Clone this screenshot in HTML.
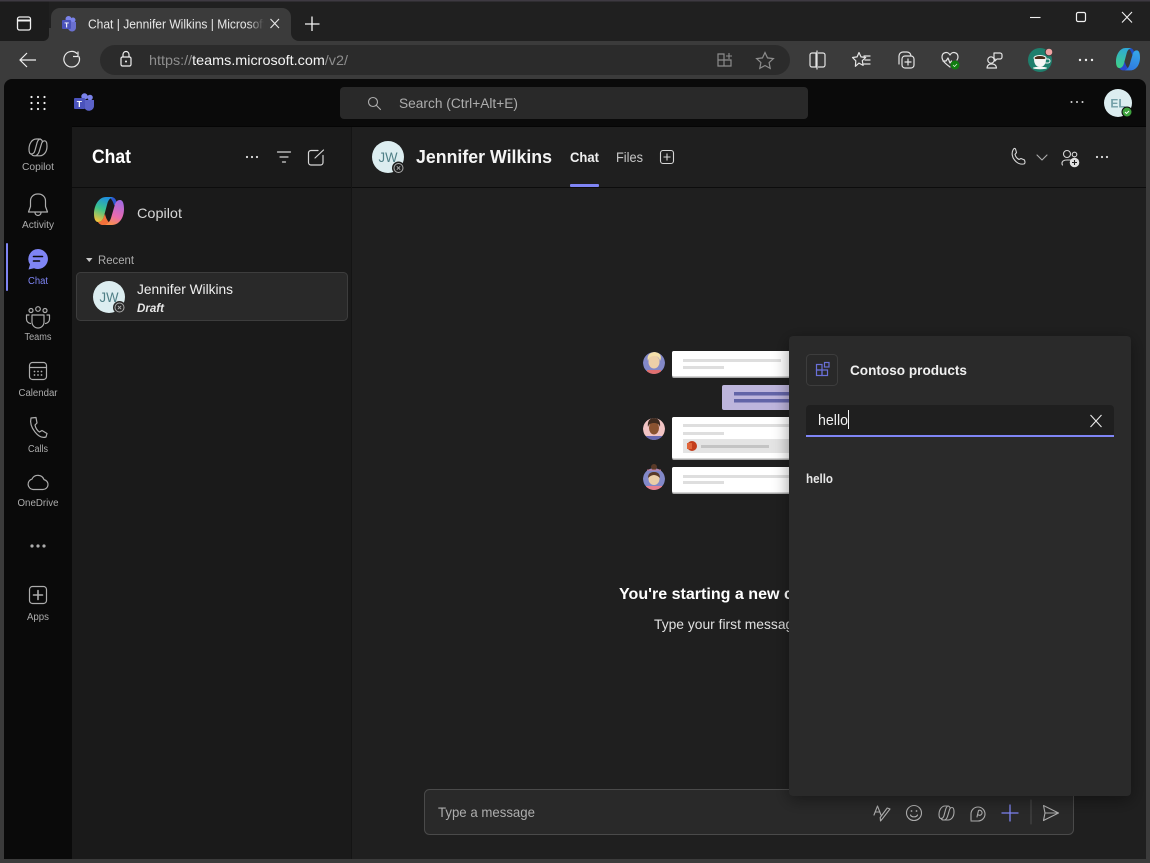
<!DOCTYPE html>
<html lang="en"><head><meta charset="utf-8"><title>Chat | Jennifer Wilkins | Microsoft Teams</title>
<style>
html,body{margin:0;padding:0;background:#1f1f1f;width:1150px;height:863px;overflow:hidden}
svg{display:block}
text{font-family:"Liberation Sans",sans-serif}
.i{fill:none;stroke:#e4e4e4;stroke-width:1.2;stroke-linecap:round;stroke-linejoin:round}
.g{fill:none;stroke:#adadad;stroke-width:1.1;stroke-linecap:round;stroke-linejoin:round}
.l{fill:#adadad;font-size:10px;text-anchor:middle}
.v{vector-effect:non-scaling-stroke}
</style></head><body>
<svg width="1150" height="863" viewBox="0 0 1150 863" xmlns="http://www.w3.org/2000/svg">
<defs>
<linearGradient id="c1" x1=".6" y1="0" x2=".3" y2="1"><stop offset="0" stop-color="#1f8fe0"/><stop offset=".5" stop-color="#3cc48a"/><stop offset="1" stop-color="#f3c23c"/></linearGradient>
<linearGradient id="c2" x1=".6" y1="0" x2=".3" y2="1"><stop offset="0" stop-color="#a56be0"/><stop offset=".6" stop-color="#e86ab0"/><stop offset="1" stop-color="#f8924a"/></linearGradient>
<linearGradient id="c3" x1=".6" y1="0" x2=".3" y2="1"><stop offset="0" stop-color="#2fa8d8"/><stop offset="1" stop-color="#3fd08a"/></linearGradient>
<linearGradient id="c4" x1=".6" y1="0" x2=".3" y2="1"><stop offset="0" stop-color="#35a5ea"/><stop offset="1" stop-color="#2f78e0"/></linearGradient>
<linearGradient id="fade" x1="0" x2="1"><stop offset="0" stop-color="#3b3b3b" stop-opacity="0"/><stop offset="1" stop-color="#3b3b3b"/></linearGradient>
<filter id="sh" x="-10%" y="-10%" width="120%" height="120%"><feDropShadow dx="0" dy="4" stdDeviation="8" flood-color="#000" flood-opacity=".4"/></filter>
<clipPath id="tabc"><rect x="88" y="8" width="176" height="30"/></clipPath>
<clipPath id="av1"><circle cx="654" cy="363" r="11"/></clipPath>
<clipPath id="av2"><circle cx="654" cy="429" r="11"/></clipPath>
<clipPath id="av3"><circle cx="654" cy="479" r="11"/></clipPath>
</defs>

<!-- browser chrome -->
<rect width="1150" height="863" fill="#3b3b3b"/>
<rect x="0" y="0" width="1150" height="41" fill="#202020"/>
<rect x="44" y="28" width="256" height="13" fill="#3b3b3b"/>
<path d="M0 0H49V35a6 6 0 0 1-6 6H0z" fill="#1c1c1c"/>
<path d="M291 8H1150V41H299a8 8 0 0 1-8-8z" fill="#202020"/>
<rect x="0" y="0" width="1150" height="1.5" fill="#3e3a42"/>
<path d="M51 41V17a9 9 0 0 1 9-9h222a9 9 0 0 1 9 9v24z" fill="#3b3b3b"/>
<rect x="17.500" y="17" width="13" height="13" rx="2" fill="none" stroke="#f0f0f0" stroke-width="1.300"/>
<path d="M17.500 20.500h13" stroke="#f0f0f0" stroke-width="2" fill="none"/>
<!-- tab favicon -->
<circle cx="73" cy="20" r="2.500" fill="#7b83eb"/><circle cx="68.500" cy="19" r="3" fill="#7b83eb"/>
<path d="M65 22h11v5a4 4 0 0 1-8 1z" fill="#6a70cf"/>
<rect x="62" y="20" width="9" height="9" rx="1" fill="#4b53bc"/>
<text x="64.500" y="27.500" font-size="7" font-weight="700" fill="#fff">T</text>
<g clip-path="url(#tabc)"><text x="88" y="28.500" font-size="12.500" fill="#e8e8e8" textLength="178" lengthAdjust="spacingAndGlyphs">Chat | Jennifer Wilkins | Microsoft</text></g>
<rect x="248" y="10" width="16" height="26" fill="url(#fade)"/>
<path d="M270.500 19l8.500 9M279 19l-8.500 9" stroke="#e8e8e8" stroke-width="1.100" fill="none"/>
<path d="M312 16.500v14.500M305 24h14.500" stroke="#f4f4f4" stroke-width="1.300" fill="none"/>
<!-- window controls -->
<path d="M1030 17.500h10.500" stroke="#f0f0f0" stroke-width="1.100"/>
<rect x="1076.500" y="12.500" width="9" height="9" rx="1.500" fill="none" stroke="#f0f0f0" stroke-width="1.200"/>
<path d="M1122 12l10 10.500M1132 12l-10 10.500" stroke="#f0f0f0" stroke-width="1.100"/>
<!-- toolbar -->
<path d="M36 60H20.500M27 53l-7 7 7 7" fill="none" stroke="#f0f0f0" stroke-width="1.200"/>
<path d="M79 56.500a7.800 7.800 0 1 1-1.800-2.800M78 51.500v5h-5" fill="none" stroke="#e8e8e8" stroke-width="1.200"/>
<rect x="100" y="45" width="690" height="30" rx="15" fill="#2b2b2b"/>
<rect x="121" y="57" width="10" height="9" rx="1.500" fill="none" stroke="#f0f0f0" stroke-width="1.200"/>
<path d="M123 57v-2.500a3 3 0 0 1 6 0V57" fill="none" stroke="#f0f0f0" stroke-width="1.200"/><circle cx="126" cy="61.500" r="1" fill="#f0f0f0"/>
<text x="149" y="65" font-size="14" fill="#8e8e8e" textLength="199" lengthAdjust="spacingAndGlyphs"><tspan>https://</tspan><tspan fill="#f4f4f4">teams.microsoft.com</tspan><tspan>/v2/</tspan></text>
<path d="M718 54h6v12h-6zM724 60h7v6h-7zM718 60h6" fill="none" stroke="#8c8c8c" stroke-width="1.200"/><path d="M729 53v6M726 56h6" stroke="#8c8c8c" stroke-width="1.100"/>
<path d="M765 52.500l2.500 5.400 5.900.7-4.300 4 1.100 5.800-5.200-2.900-5.200 2.900 1.100-5.800-4.300-4 5.900-.7z" fill="none" stroke="#8c8c8c" stroke-width="1.200"/>
<path d="M816 53h-4a2 2 0 0 0-2 2v10a2 2 0 0 0 2 2h4zM818.500 53h4.500a2 2 0 0 1 2 2v10a2 2 0 0 1-2 2h-4.500M817 51v18" class="i"/>
<path d="M859 52.500l2 4.400 4.700.6-3.400 3.200.8 4.700-4.100-2.300-3.600 3.200.4-5.500-3.300-3.300 4.600-.6zM864 56h6M865 60h5M864 64h6" class="i"/>
<path d="M899 64v-8a4 4 0 0 1 4-4h4a4 4 0 0 1 4 4" class="i"/><rect x="902" y="56" width="12" height="12" rx="3" class="i"/><path d="M908 59v6M905 62h6" class="i"/>
<path d="M950 55c2-4 8-3 8 2 0 1-.3 2-1 3M950 55c-2-4-8-3-8 2 0 4 4 7 8 10M943 61h3l2-3 2 5 1.500-2" class="i"/><circle cx="955" cy="65" r="4.500" fill="#107c10"/><path d="M953 65l1.500 1.500 2.500-2.500" stroke="#cfe8cf" fill="none" stroke-width=".8"/>
<circle cx="991" cy="60" r="3.200" class="i"/><path d="M987 68a4 4 0 0 1 4-4h1.500a4 4 0 0 1 4 4z" class="i"/><path d="M994 53h6a2 2 0 0 1 2 2v2a2 2 0 0 1-2 2h-3l-2 2v-2h-1z" class="i"/>
<circle cx="1040" cy="60" r="12" fill="#1f7f6d"/>
<ellipse cx="1040" cy="58" rx="6" ry="2.500" fill="#4a2c18" stroke="#f5f5f5" stroke-width="1"/><path d="M1034 59c0 6 3 8 6 8s6-2 6-8z" fill="#f5f5f5"/><path d="M1046 59h2a2 2 0 0 1 0 4h-3" fill="none" stroke="#f5f5f5"/><ellipse cx="1040" cy="68" rx="7" ry="1.300" fill="#f5f5f5"/>
<circle cx="1049" cy="52" r="3.800" fill="#f0a2a2" stroke="#3b3b3b"/>
<circle cx="1080" cy="60" r="1.200" fill="#f0f0f0"/><circle cx="1086" cy="60" r="1.200" fill="#f0f0f0"/><circle cx="1092" cy="60" r="1.200" fill="#f0f0f0"/>
<g transform="translate(1040.800 -109.600) scale(.8)">
<path d="M108 197h3c3 0 5 2 5.500 5l.5 5-3-2c-1-4-3-7-6-8z" fill="#1f50c8"/>
<path d="M98 222c3 0 5-2 6-6l1-2c1 5 3 8 7 11h-9c-2 0-4-1-5-3z" fill="#2848d0"/>
<path d="M106 197h7c-3 1-4.500 3-5.500 6L104 216c-1 4-3 6-6 6-2.500 0-4-3-4-8 0-9 5-17 12-17z" fill="url(#c3)"/>
<path d="M112 225h-7c3-1 5-4 6-7l3.500-12c1-4 2.500-6 5.500-6s4 4 4 9c0 9-5 16-12 16z" fill="url(#c4)"/>
</g>

<!-- teams app -->
<path d="M4 859V87a8 8 0 0 1 8-8h1126a8 8 0 0 1 8 8v772z" fill="#0a0a0a"/>
<rect x="72" y="127" width="280" height="732" fill="#1a1a1a"/>
<rect x="352" y="127" width="794" height="732" fill="#1f1f1f"/>
<rect x="72" y="126" width="1074" height="1" fill="#050505"/>
<rect x="72" y="187" width="1074" height="1" fill="#0c0c0c"/>
<rect x="351" y="127" width="1" height="732" fill="#141414"/>
<!-- top bar -->
<g fill="#f0f0f0"><circle cx="31.500" cy="97" r="1.100"/><circle cx="38" cy="97" r="1.100"/><circle cx="44.500" cy="97" r="1.100"/><circle cx="31.500" cy="103" r="1.100"/><circle cx="38" cy="103" r="1.100"/><circle cx="44.500" cy="103" r="1.100"/><circle cx="31.500" cy="109" r="1.100"/><circle cx="38" cy="109" r="1.100"/><circle cx="44.500" cy="109" r="1.100"/></g>
<circle cx="90" cy="97.500" r="2.800" fill="#7b83eb"/><circle cx="84.500" cy="96.500" r="3.200" fill="#7b83eb"/>
<path d="M80 100h14v5a5 5 0 0 1-10 1.500z" fill="#5b62c8"/>
<rect x="74" y="98" width="11" height="11" rx="1" fill="#4b53bc"/>
<text x="76.800" y="106.800" font-size="8.500" font-weight="700" fill="#fff">T</text>
<rect x="340" y="87" width="468" height="32" rx="4" fill="#292929"/>
<circle cx="373" cy="102" r="4.500" class="g"/><path d="M376.500 105.500l4 4" class="g"/>
<text x="399" y="108" font-size="13.500" fill="#adadad" textLength="119" lengthAdjust="spacingAndGlyphs">Search (Ctrl+Alt+E)</text>
<g fill="#d6d6d6"><circle cx="1071.500" cy="102" r="1"/><circle cx="1077" cy="102" r="1"/><circle cx="1082.500" cy="102" r="1"/></g>
<circle cx="1118" cy="103" r="14" fill="#dcedf0"/>
<text x="1118" y="107.500" font-size="12" font-weight="700" fill="#74a0a8" text-anchor="middle">EL</text>
<circle cx="1127" cy="112" r="5.500" fill="#0a0a0a"/><circle cx="1127" cy="112" r="4.500" fill="#3ea33e"/><path d="M1125 112l1.500 1.500 2.500-2.500" stroke="#fff" stroke-width=".9" fill="none"/>

<!-- rail -->
<g class="i" style="stroke:#adadad">
<g transform="translate(-27.400 20.800) scale(.6)">
<path class="v" d="M106 197h5c3 0 5 2 5.500 5M107.500 203c1-3 3-6 5.500-6M107.500 203L104 216c-1 4-3 6-6 6-2.500 0-4-3-4-8 0-9 5-17 12-17"/>
<path class="v" d="M112 225h-7c3-1 5-4 6-7l3.500-12c1-4 2.500-6 5.500-6s4 4 4 9c0 9-5 16-12 16zM98 222c1 2 3 3 5 3h2"/>
</g>
<path d="M38 194a7 7 0 0 0-7.500 7v5.500l-2 5.500h19l-2-5.500V201a7 7 0 0 0-7.500-7zM35 212.500a3 3 0 0 0 6 0"/>
<circle cx="38" cy="309" r="2.300"/><circle cx="31" cy="310.500" r="2"/><circle cx="45" cy="310.500" r="2"/>
<path d="M32 315h12v7a6 6 0 0 1-12 0zM29 315h-2.500v4a4.500 4.500 0 0 0 4 4.500M47 315h2.500v4a4.500 4.500 0 0 1-4 4.500"/>
<rect x="29.500" y="362.500" width="17" height="17" rx="3"/><path d="M29.500 367.500h17"/>
<path d="M31 418c-1 4 0 9 4 14s8 6 11 5l1-3.500-5-3-2.500 1.500c-2-1-4-4-4.500-7l2-2-1-5.500z"/>
<path d="M33 489h10a5 5 0 0 0 1-9.900 6.500 6.500 0 0 0-12-.5 5.300 5.300 0 0 0 1 10.400z" transform="translate(0,.5)"/>
<rect x="29.500" y="586.500" width="17" height="17" rx="3"/><path d="M38 590.500v9M33.500 595h9" stroke-width="1.600"/>
</g>
<g fill="#adadad"><circle cx="34.500" cy="371.500" r=".9"/><circle cx="38" cy="371.500" r=".9"/><circle cx="41.500" cy="371.500" r=".9"/><circle cx="34.500" cy="375" r=".9"/><circle cx="38" cy="375" r=".9"/><circle cx="41.500" cy="375" r=".9"/>
<circle cx="32" cy="546" r="1.600"/><circle cx="38" cy="546" r="1.600"/><circle cx="44" cy="546" r="1.600"/></g>
<rect x="6" y="243" width="2" height="48" rx="1" fill="#7f85f5"/>
<path d="M38 249a10 10 0 1 1-4 19.200l-5.500 1.300 1.500-5A10 10 0 0 1 38 249z" fill="#7f85f5"/>
<path d="M33.500 256.500h9M33.500 261h6" stroke="#0a0a0a" stroke-width="1.600" stroke-linecap="round"/>
<text x="38" y="170" class="l" textLength="32" lengthAdjust="spacingAndGlyphs">Copilot</text>
<text x="38" y="228" class="l" textLength="32" lengthAdjust="spacingAndGlyphs">Activity</text>
<text x="38" y="284" class="l" style="fill:#7f85f5" textLength="20" lengthAdjust="spacingAndGlyphs">Chat</text>
<text x="38" y="340" class="l" textLength="27" lengthAdjust="spacingAndGlyphs">Teams</text>
<text x="38" y="396" class="l" textLength="39" lengthAdjust="spacingAndGlyphs">Calendar</text>
<text x="38" y="452" class="l" textLength="20" lengthAdjust="spacingAndGlyphs">Calls</text>
<text x="38" y="506" class="l" textLength="41" lengthAdjust="spacingAndGlyphs">OneDrive</text>
<text x="38" y="620" class="l" textLength="22" lengthAdjust="spacingAndGlyphs">Apps</text>

<!-- chat list -->
<text x="92" y="163" font-size="19" font-weight="700" fill="#fff" textLength="39" lengthAdjust="spacingAndGlyphs">Chat</text>
<g fill="#e0e0e0"><circle cx="247" cy="157" r="1.100"/><circle cx="252" cy="157" r="1.100"/><circle cx="257" cy="157" r="1.100"/></g>
<path d="M277.500 152h13M280 157h8M282.500 162h3" class="i" style="stroke:#d6d6d6"/>
<path d="M318 150.500h-7a2.500 2.500 0 0 0-2.500 2.500v9.500a2.500 2.500 0 0 0 2.500 2.500h9.500a2.500 2.500 0 0 0 2.500-2.500v-7M315 158l8.500-8" class="i" style="stroke:#d6d6d6"/>
<!-- copilot logo -->
<path d="M108 197h3c3 0 5 2 5.500 5l.5 5-3-2c-1-4-3-7-6-8z" fill="#2d58d0"/>
<path d="M98 222c3 0 5-2 6-6l1-2c1 5 3 8 7 11h-9c-2 0-4-1-5-3z" fill="#f2703a"/>
<path d="M106 197h7c-3 1-4.500 3-5.500 6L104 216c-1 4-3 6-6 6-2.500 0-4-3-4-8 0-9 5-17 12-17z" fill="url(#c1)"/>
<path d="M112 225h-7c3-1 5-4 6-7l3.500-12c1-4 2.500-6 5.500-6s4 4 4 9c0 9-5 16-12 16z" fill="url(#c2)"/>
<text x="137" y="218" font-size="14" fill="#d6d6d6" textLength="45" lengthAdjust="spacingAndGlyphs">Copilot</text>
<path d="M86 258h6.500l-3.250 4z" fill="#c8c8c8"/>
<text x="98" y="264" font-size="12" fill="#adadad" textLength="36" lengthAdjust="spacingAndGlyphs">Recent</text>
<rect x="76.500" y="272.500" width="271" height="48" rx="4" fill="#292929" stroke="#3d3d3d"/>
<circle cx="109" cy="297" r="16" fill="#dcedf0"/>
<text x="109" y="302" font-size="13.500" fill="#4f7f86" text-anchor="middle" textLength="19" lengthAdjust="spacingAndGlyphs">JW</text>
<circle cx="119.500" cy="307.500" r="6.500" fill="#292929"/><circle cx="119.500" cy="307.500" r="4.500" fill="none" stroke="#adadad"/><path d="M117.800 305.800l3.400 3.400M121.200 305.800l-3.400 3.400" stroke="#adadad" stroke-width=".9"/>
<text x="137" y="294" font-size="14" fill="#f0f0f0" textLength="96" lengthAdjust="spacingAndGlyphs">Jennifer Wilkins</text>
<text x="137" y="312" font-size="12" font-style="italic" font-weight="700" fill="#e8e8e8" textLength="27" lengthAdjust="spacingAndGlyphs">Draft</text>

<!-- main header -->
<circle cx="388" cy="157" r="16" fill="#dcedf0"/>
<text x="388" y="162" font-size="13.500" fill="#4f7f86" text-anchor="middle" textLength="19" lengthAdjust="spacingAndGlyphs">JW</text>
<circle cx="398.500" cy="168" r="6.500" fill="#1f1f1f"/><circle cx="398.500" cy="168" r="4.500" fill="none" stroke="#adadad"/><path d="M396.800 166.300l3.400 3.400M400.200 166.300l-3.400 3.400" stroke="#adadad" stroke-width=".9"/>
<text x="416" y="163" font-size="18.500" font-weight="700" fill="#f4f4f4" textLength="136" lengthAdjust="spacingAndGlyphs">Jennifer Wilkins</text>
<text x="570" y="162" font-size="14" font-weight="700" fill="#f0f0f0" textLength="29" lengthAdjust="spacingAndGlyphs">Chat</text>
<rect x="570" y="184" width="29" height="3" rx="1" fill="#7f85f5"/>
<text x="616" y="162" font-size="14" fill="#c8c8c8" textLength="27" lengthAdjust="spacingAndGlyphs">Files</text>
<rect x="660.500" y="150.500" width="13" height="13" rx="2.500" fill="none" stroke="#d6d6d6" stroke-width="1.100"/><path d="M667 153.500v7M663.500 157h7" stroke="#d6d6d6" stroke-width="1.100"/>
<path d="M1013 150c-1.500 3-1 7 1.500 10s6 4.500 9 4c1 0 1.500-1 1.500-2l-.5-2-3.500-1.500-2 1c-2-1-3.500-3-4-5l1.500-2-1-3.500c-.5-1-1.700-.8-2.500 1z" class="g" style="stroke:#d6d6d6"/>
<path d="M1037 155l5 5 5-5" class="g" style="stroke:#adadad"/>
<circle cx="1067" cy="154" r="3.500" class="g" style="stroke:#d6d6d6"/><circle cx="1074.500" cy="154.500" r="2.300" class="g" style="stroke:#d6d6d6"/>
<path d="M1062.500 165a2 2 0 0 1-.5-1.500c0-3 2.500-3.500 5-3.500h4" class="g" style="stroke:#d6d6d6"/>
<circle cx="1074.500" cy="162.500" r="4.800" fill="#e0e0e0"/><path d="M1074.500 160v5M1072 162.500h5" stroke="#1f1f1f" stroke-width="1.100"/>
<g fill="#e0e0e0"><circle cx="1097" cy="157" r="1.100"/><circle cx="1102" cy="157" r="1.100"/><circle cx="1107" cy="157" r="1.100"/></g>

<!-- illustration -->
<g>
<g clip-path="url(#av1)"><circle cx="654" cy="363" r="11" fill="#8288c8"/><ellipse cx="654" cy="362" rx="5.500" ry="6.500" fill="#eccfa8"/><path d="M648 361c-2-7 4-9 7-9s8 3 5 9c-1-4-3-5-6-5s-5 2-6 5z" fill="#f4dfa8"/><rect x="647" y="370" width="14" height="5" fill="#e07070"/></g>
<g clip-path="url(#av2)"><circle cx="654" cy="429" r="11" fill="#f2c4c4"/><ellipse cx="654" cy="428" rx="5" ry="6.500" fill="#8a5230"/><path d="M648 427c-1-7 3-9 6-9s7 2 6 9c-1-3-3-4-6-4s-5 1-6 4z" fill="#3f2a1e"/><rect x="646" y="436" width="16" height="5" fill="#6868b0"/></g>
<g clip-path="url(#av3)"><circle cx="654" cy="479" r="11" fill="#8288c8"/><ellipse cx="654" cy="479" rx="5.500" ry="6" fill="#eccfa8"/><path d="M648 478c0-5 3-6 6-6s6 1 6 6c-2-2-4-3-6-3s-4 1-6 3z" fill="#5a3a28"/><rect x="646" y="486" width="16" height="5" fill="#e88090"/></g>
<circle cx="654" cy="467" r="3" fill="#5a3a28"/><path d="M647 470h14" stroke="#e88090" stroke-width=".8"/>
<rect x="672" y="351" width="130" height="27" rx="2" fill="#a9a9a9"/><rect x="672" y="351" width="130" height="25.500" rx="2" fill="#fff"/>
<rect x="683" y="359" width="98" height="3" fill="#dedede"/><rect x="683" y="366" width="41" height="3" fill="#dedede"/>
<rect x="722" y="385" width="80" height="25" rx="2" fill="#bdb5dc"/>
<rect x="734" y="392" width="60" height="3.500" fill="#6264a7"/><rect x="734" y="399" width="60" height="3.500" fill="#6264a7"/>
<rect x="672" y="417" width="130" height="43" rx="2" fill="#a9a9a9"/><rect x="672" y="417" width="130" height="41.500" rx="2" fill="#fff"/>
<rect x="683" y="424" width="110" height="3" fill="#dedede"/><rect x="683" y="432" width="41" height="3" fill="#dedede"/>
<rect x="683" y="439" width="110" height="14" fill="#e4e4e4"/><circle cx="692" cy="446" r="5" fill="#c43e1c"/><rect x="687" y="443" width="5" height="6" fill="#e0653a"/>
<rect x="701" y="445" width="68" height="3" fill="#c4c4c4"/>
<rect x="672" y="467" width="130" height="27" rx="2" fill="#a9a9a9"/><rect x="672" y="467" width="130" height="25.500" rx="2" fill="#fff"/>
<rect x="683" y="475" width="110" height="3" fill="#dedede"/><rect x="683" y="481" width="41" height="3" fill="#dedede"/>
</g>
<text x="619" y="599" font-size="15.500" font-weight="700" fill="#fff" textLength="198" lengthAdjust="spacingAndGlyphs">You're starting a new chat</text>
<text x="654" y="629" font-size="14" fill="#e0e0e0" textLength="190" lengthAdjust="spacingAndGlyphs">Type your first message below.</text>

<!-- compose -->
<rect x="424.500" y="789.500" width="649" height="45" rx="5" fill="#292929" stroke="#4a4a4a"/>
<text x="438" y="817" font-size="14" fill="#adadad" textLength="97" lengthAdjust="spacingAndGlyphs">Type a message</text>
<g class="g">
<path d="M874 815l3.500-9 3.500 9M875.300 812h4.500M890 809l-7 9-2.500 3-.3-3.500 7-9.500z"/>
<circle cx="914" cy="813" r="7.500"/><path d="M910.500 815c1 2.500 6 2.500 7 0"/>
<g transform="translate(892 707.500) scale(.5)">
<path class="v" d="M106 197h5c3 0 5 2 5.500 5M107.500 203c1-3 3-6 5.500-6M107.500 203L104 216c-1 4-3 6-6 6-2.500 0-4-3-4-8 0-9 5-17 12-17"/>
<path class="v" d="M112 225h-7c3-1 5-4 6-7l3.500-12c1-4 2.500-6 5.500-6s4 4 4 9c0 9-5 16-12 16zM98 222c1 2 3 3 5 3h2"/>
</g>
<path d="M971 820v-6a7 7 0 1 1 7 7h-7M977 817l1.500-6.500a2.500 2.500 0 1 1 0 4.500"/>
<path d="M1010 805v16M1002 813h16" style="stroke:#7f85f5;stroke-width:1.300"/>
<path d="M1031 800v24" style="stroke:#484848"/>
<path d="M1043.500 805.500l15 7.500-15 7.500 1.500-7.500zM1045 813h13"/>
</g>
<g fill="#adadad"><circle cx="911.500" cy="811" r=".9"/><circle cx="916.500" cy="811" r=".9"/></g>

<!-- panel -->
<rect x="789" y="336" width="342" height="460" rx="4" fill="#292929" filter="url(#sh)"/>
<rect x="806.500" y="354.500" width="31" height="31" rx="4" fill="#292929" stroke="#3d3d3d"/>
<g fill="none" stroke="#6a70d8" stroke-width="1.200"><rect x="816.500" y="364.500" width="5.500" height="5.500"/><rect x="816.500" y="370" width="5.500" height="5.500"/><rect x="822" y="370" width="5.500" height="5.500"/><rect x="824.500" y="362.500" width="4.500" height="4.500"/></g>
<text x="850" y="375" font-size="13.500" font-weight="700" fill="#f0f0f0" textLength="117" lengthAdjust="spacingAndGlyphs">Contoso products</text>
<rect x="806" y="405" width="308" height="32" rx="4" fill="#1f1f1f"/>
<rect x="806" y="435" width="308" height="2" fill="#7f85f5"/>
<text x="818" y="425" font-size="14.500" fill="#f0f0f0" textLength="30" lengthAdjust="spacingAndGlyphs">hello</text>
<rect x="848" y="410" width="1" height="19" fill="#f4f4f4"/>
<path d="M1090.500 415l11 12M1101.500 415l-11 12" stroke="#e8e8e8" stroke-width="1.100"/>
<text x="806" y="483" font-size="12.500" font-weight="700" fill="#e8e8e8" textLength="27" lengthAdjust="spacingAndGlyphs">hello</text>
</svg>
</body></html>
